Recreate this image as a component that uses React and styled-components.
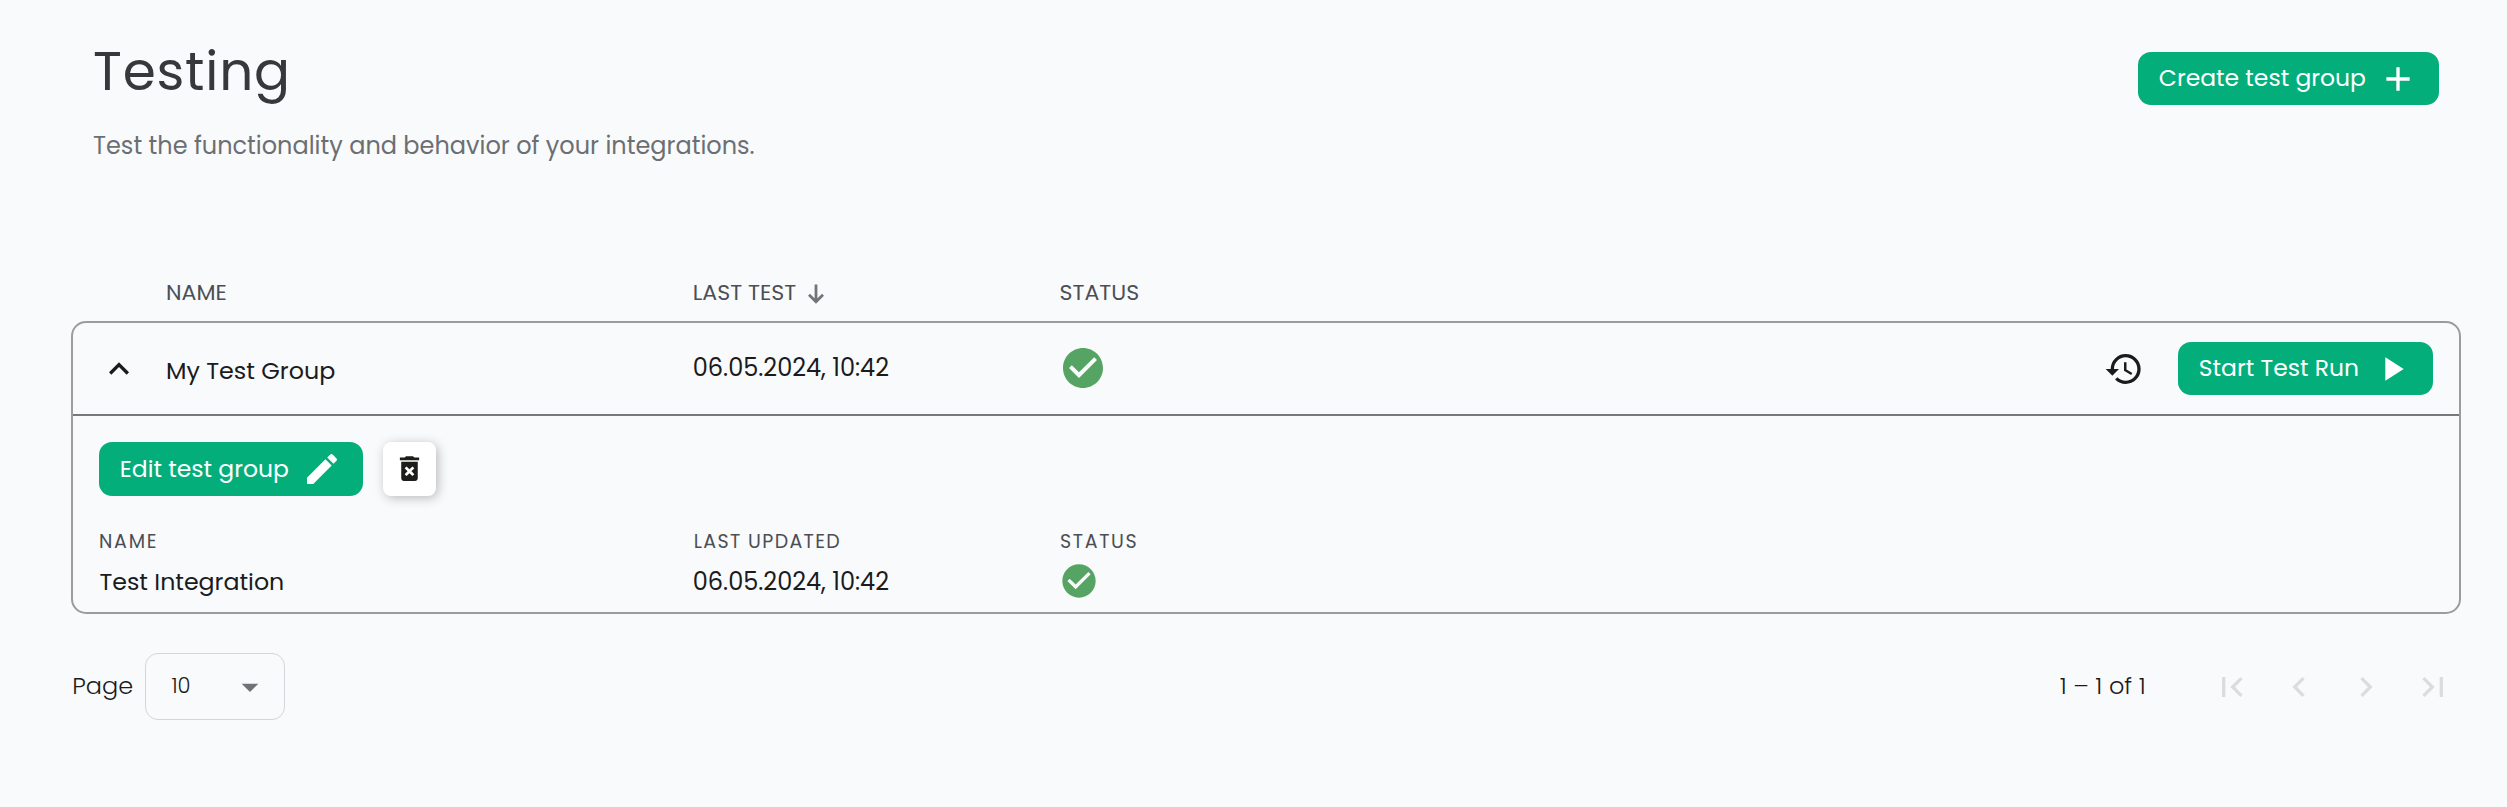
import React from "react";
import styled, { createGlobalStyle } from "styled-components";
import {
  MdAdd,
  MdArrowDropDown,
  MdCheckCircle,
  MdChevronLeft,
  MdChevronRight,
  MdDeleteForever,
  MdEdit,
  MdExpandLess,
  MdFirstPage,
  MdHistory,
  MdLastPage,
  MdPlayArrow,
} from "react-icons/md";

const GlobalStyle = createGlobalStyle`
  *, *::before, *::after { box-sizing: border-box; }
  body {
    margin: 0;
    background: #f9fafc;
    color: #1a1b1c;
    font-family: Poppins, Inter, "Liberation Sans", sans-serif;
    font-size: 24px;
  }
  svg { display: block; flex: none; }
`;

const Page = styled.main`
  display: flex;
  flex-direction: column;
  min-height: 807px;
  padding: 41.5px 46px 0 71px;
`;

const Header = styled.header`
  display: flex;
  justify-content: space-between;
  align-items: flex-start;
  padding: 0 22px 0 22px;
  margin-bottom: 112px;
`;

const Title = styled.h1`
  margin: 0 0 29px;
  font-size: 53.3px;
  font-weight: 400;
  line-height: 60px;
  letter-spacing: 0.8px;
  color: #36393b;
`;

const Subtitle = styled.p`
  margin: 0;
  line-height: 30px;
  color: #6b6f72;
`;

const Button = styled.button`
  display: flex;
  align-items: center;
  justify-content: space-between;
  width: ${(p) => p.$width}px;
  height: ${(p) => p.$height || 53}px;
  margin-top: ${(p) => p.$top || 0}px;
  padding: 0 21px 0 20.8px;
  border: 0;
  border-radius: 13px;
  background: #03ae7b;
  color: #fff;
  font: inherit;
  font-size: 23.45px;
  white-space: nowrap;
`;

const ButtonText = styled.span`
  padding-bottom: 2px;
`;

const IconButton = styled.button`
  display: flex;
  align-items: center;
  justify-content: center;
  width: 53px;
  height: 54px;
  padding: 0 0 1px;
  border: 0;
  border-radius: 8px;
  background: #fff;
  color: #1d1d1b;
  box-shadow: 2px 2px 11px rgba(0, 0, 0, 0.26);
`;

const HeadRow = styled.div`
  display: grid;
  grid-template-columns: 93px 526.8px 366.7px 1fr;
  align-items: center;
  height: 40px;
  padding-left: 2px;
  margin-bottom: 8.5px;
`;

const HeadCell = styled.span`
  display: flex;
  align-items: center;
  gap: 12px;
  font-size: 22.1px;
  line-height: 40px;
  color: #4b4f54;
  svg { margin-top: 3px; }
`;

const Card = styled.section`
  border: 2px solid #9b9c9e;
  border-radius: 15px;
`;

const GroupRow = styled.div`
  display: grid;
  grid-template-columns: 93px 526.8px 366.2px 1fr auto;
  align-items: center;
  height: 93px;
  border-bottom: 2px solid #77787b;
`;

const Toggle = styled.span`
  padding: 1px 0 0 26px;
`;

const GroupName = styled.span`
  grid-column: 2;
  padding-top: 4px;
  font-size: 23.8px;
`;

const RaisedCell = styled.span`
  padding-bottom: 2px;
`;

const Actions = styled.div`
  grid-column: 5;
  display: flex;
  align-items: center;
  gap: 34px;
  padding-right: 26px;
`;

const Details = styled.div`
  height: 196px;
  padding: 26px 26px 0;
`;

const Toolbar = styled.div`
  display: flex;
  gap: 20px;
  margin-bottom: 31px;
`;

const DetailRow = styled.div`
  display: grid;
  grid-template-columns: 593.8px 366.2px 1fr;
  align-items: center;
  height: ${(p) => p.$height}px;
  margin-bottom: ${(p) => p.$gap || 0}px;
`;

const Label = styled.span`
  font-size: 19px;
  color: #4b4f54;
  letter-spacing: ${(p) => p.$spacing}px;
  padding-left: ${(p) => p.$indent || 0}px;
`;

const IntegrationName = styled.span`
  padding-left: 0.5px;
  font-size: 23.7px;
`;

const Footer = styled.footer`
  display: flex;
  align-items: center;
  justify-content: space-between;
  height: 67px;
  margin-top: 39px;
  padding: 0 8.5px 0 1.3px;
  font-weight: 300;
`;

const PageSize = styled.label`
  display: flex;
  align-items: center;
`;

const PageText = styled.span`
  width: 72.7px;
  padding-bottom: 1.5px;
`;

const Select = styled.span`
  display: flex;
  align-items: center;
  justify-content: space-between;
  width: 140px;
  height: 67px;
  padding: 0 14px 0 25.5px;
  border: 1px solid #d3d5d8;
  border-radius: 13px;
  font-size: 21px;
  svg { color: #6f7376; }
`;

const SelectValue = styled.span`
  padding-bottom: 1.5px;
`;

const Pager = styled.nav`
  display: flex;
  align-items: center;
  gap: 26.7px;
  color: #dadcde;
`;

const Range = styled.span`
  margin-right: 40px;
  padding-bottom: 1.5px;
  color: #1a1b1c;
`;

const SortArrow = () => (
  <svg width="16" height="20" viewBox="0 0 16 20" fill="none" stroke="#727578" strokeWidth="2.8">
    <path d="M8 0.5V18M1 10.8L8 17.8L15 10.8" />
  </svg>
);

export default function App() {
  return (
    <>
      <GlobalStyle />
      <Page>
        <Header>
          <div>
            <Title>Testing</Title>
            <Subtitle>Test the functionality and behavior of your integrations.</Subtitle>
          </div>
          <Button $width={301} $top={10.5}>
            <ButtonText>Create test group</ButtonText>
            <MdAdd size={40} />
          </Button>
        </Header>

        <HeadRow>
          <span />
          <HeadCell>NAME</HeadCell>
          <HeadCell>
            LAST TEST
            <SortArrow />
          </HeadCell>
          <HeadCell>STATUS</HeadCell>
        </HeadRow>

        <Card>
          <GroupRow>
            <Toggle>
              <MdExpandLess size={40} />
            </Toggle>
            <GroupName>My Test Group</GroupName>
            <RaisedCell>06.05.2024, 10:42</RaisedCell>
            <RaisedCell>
              <MdCheckCircle size={48} color="#56a463" />
            </RaisedCell>
            <Actions>
              <MdHistory size={40} />
              <Button $width={255}>
                <ButtonText>Start Test Run</ButtonText>
                <MdPlayArrow size={40} />
              </Button>
            </Actions>
          </GroupRow>

          <Details>
            <Toolbar>
              <Button $width={264} $height={54}>
                <ButtonText>Edit test group</ButtonText>
                <MdEdit size={40} />
              </Button>
              <IconButton aria-label="Delete">
                <MdDeleteForever size={33} />
              </IconButton>
            </Toolbar>
            <DetailRow $height={25} $gap={9}>
              <Label $spacing={1.75}>NAME</Label>
              <Label $spacing={1.36} $indent={1}>LAST UPDATED</Label>
              <Label $spacing={1.64} $indent={1}>STATUS</Label>
            </DetailRow>
            <DetailRow $height={40}>
              <IntegrationName>Test Integration</IntegrationName>
              <span>06.05.2024, 10:42</span>
              <MdCheckCircle size={40} color="#56a463" />
            </DetailRow>
          </Details>
        </Card>

        <Footer>
          <PageSize>
            <PageText>Page</PageText>
            <Select>
              <SelectValue>10</SelectValue>
              <MdArrowDropDown size={40} />
            </Select>
          </PageSize>
          <Pager>
            <Range>1 – 1 of 1</Range>
            <MdFirstPage size={40} />
            <MdChevronLeft size={40} />
            <MdChevronRight size={40} />
            <MdLastPage size={40} />
          </Pager>
        </Footer>
      </Page>
    </>
  );
}
